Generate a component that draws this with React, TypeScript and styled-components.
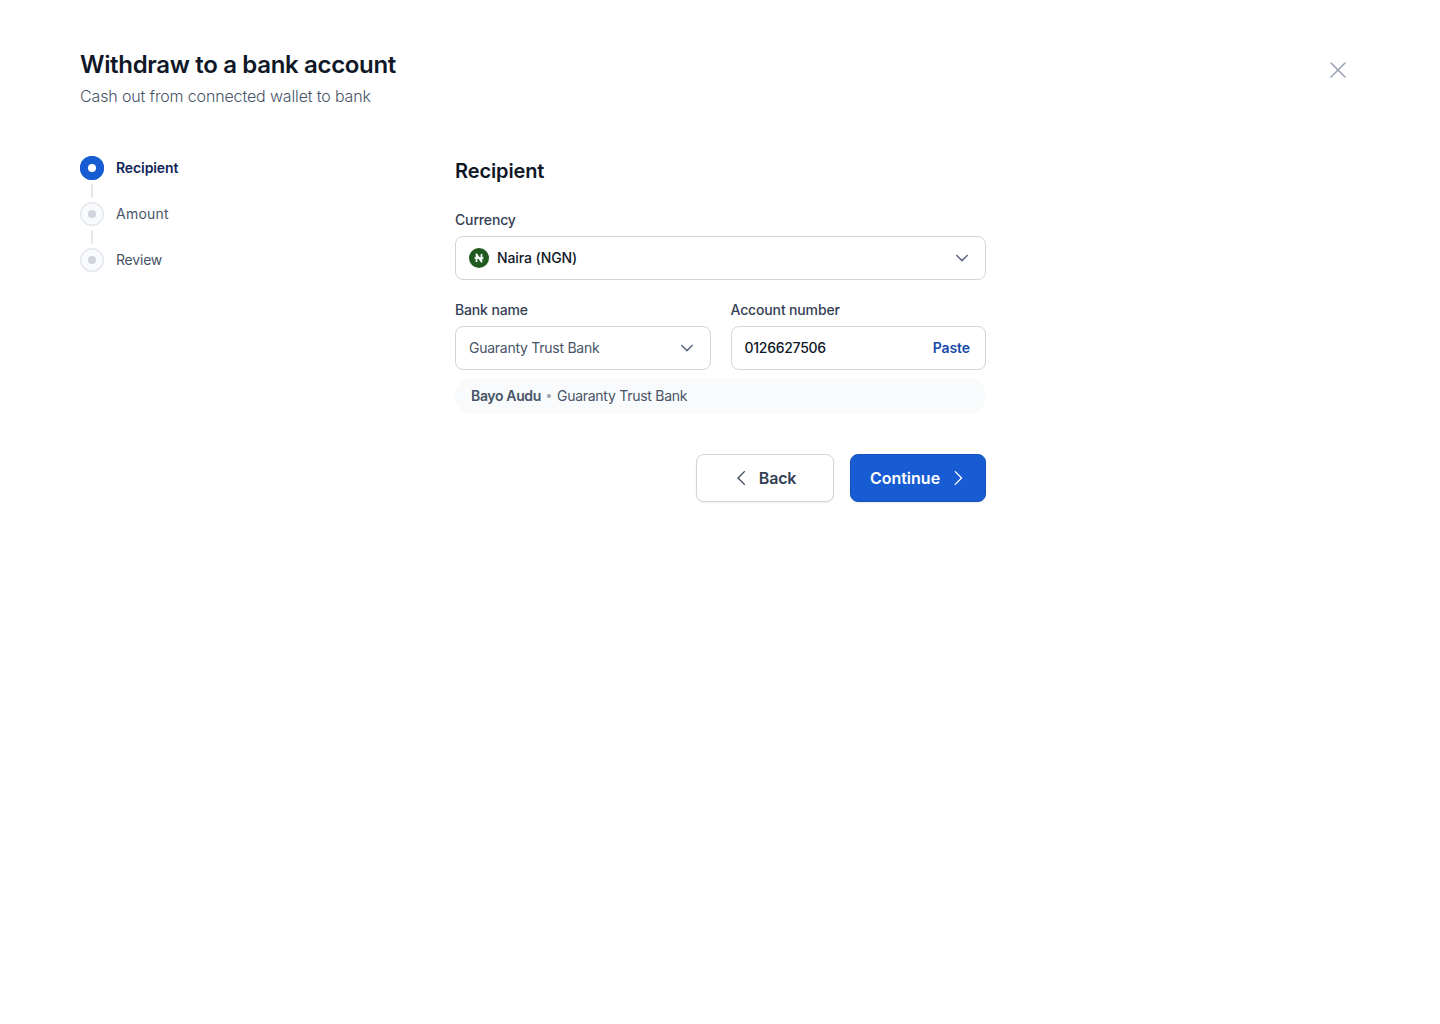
import React from "react";
import styled, { createGlobalStyle } from "styled-components";

const colors = {
  ink: "#101828",
  navy: "#0f2557",
  body: "#344054",
  muted: "#475467",
  line: "#d0d5dd",
  soft: "#e4e7ec",
  surface: "#f9fafb",
  primary: "#175cd3",
  link: "#1849a9",
};

const GlobalStyle = createGlobalStyle`
  *, *::before, *::after { box-sizing: border-box; }
  body {
    margin: 0;
    background: #fff;
    color: ${colors.ink};
    font-family: Inter, "Liberation Sans", sans-serif;
    -webkit-font-smoothing: antialiased;
  }
  h1, h2, p, ol { margin: 0; padding: 0; }
  button { font-family: inherit; cursor: pointer; }
  svg { display: block; flex: none; }
`;

const Page = styled.main`
  min-height: 1024px;
  padding: 48px 80px;
`;

const Header = styled.header`
  display: flex;
  justify-content: space-between;
  align-items: flex-start;
  height: 60px;
`;

const Title = styled.h1`
  padding-top: 1px;
  font-size: 24px;
  line-height: 32px;
  font-weight: 600;
  letter-spacing: -0.33px;
`;

const Subtitle = styled.p`
  margin-top: 3px;
  font-size: 16px;
  line-height: 24px;
  font-weight: 350;
  letter-spacing: -0.14px;
  color: ${colors.muted};
`;

const CloseButton = styled.button`
  display: grid;
  place-items: center;
  width: 44px;
  height: 44px;
  padding: 0;
  border: 0;
  background: none;
  color: #98a2b3;
`;

const Body = styled.div`
  display: grid;
  grid-template-columns: 375px 531px;
  margin-top: 48px;
  align-items: start;
`;

const Steps = styled.ol`
  display: flex;
  flex-direction: column;
  list-style: none;
`;

const Step = styled.li<{ $active?: boolean; $spacing: number }>`
  display: flex;
  align-items: center;
  gap: 12px;
  height: 24px;
  font-size: 14px;
  line-height: 20px;
  font-weight: ${(p) => (p.$active ? 600 : 400)};
  letter-spacing: ${(p) => p.$spacing}px;
  color: ${(p) => (p.$active ? colors.navy : colors.muted)};
`;

const StepDot = styled.span<{ $active?: boolean }>`
  display: grid;
  place-items: center;
  width: 24px;
  height: 24px;
  border-radius: 50%;
  box-shadow: inset 0 0 0 1.5px ${(p) => (p.$active ? colors.primary : colors.soft)};
  background: ${(p) => (p.$active ? colors.primary : colors.surface)};

  &::after {
    content: "";
    width: 8px;
    height: 8px;
    border-radius: 50%;
    background: ${(p) => (p.$active ? "#fff" : colors.line)};
  }
`;

const Connector = styled.li`
  width: 2px;
  height: 14px;
  margin: 4px 0 4px 11px;
  border-radius: 2px;
  background: ${colors.soft};
`;

const Form = styled.section`
  display: flex;
  flex-direction: column;
`;

const Heading = styled.h2`
  font-size: 20px;
  line-height: 30px;
  font-weight: 600;
  letter-spacing: -0.12px;
`;

const Label = styled.span`
  font-size: 14px;
  line-height: 20px;
  font-weight: 500;
  letter-spacing: -0.15px;
  color: ${colors.body};
`;

const Field = styled.div`
  display: flex;
  flex-direction: column;
  gap: 6px;
`;

const CurrencyField = styled(Field)`
  margin-top: 24px;
`;

const FieldRow = styled.div`
  display: grid;
  grid-template-columns: 1fr 1fr;
  gap: 20px;
  margin-top: 20px;
`;

const Control = styled.div`
  display: flex;
  align-items: center;
  gap: 8px;
  height: 44px;
  padding: 0 13px;
  border: 1px solid ${colors.line};
  border-radius: 8px;
  background: #fff;
`;

const Value = styled.span<{ $muted?: boolean; $spacing: number }>`
  flex: 1;
  font-size: 14px;
  line-height: 20px;
  font-weight: ${(p) => (p.$muted ? 400 : 500)};
  letter-spacing: ${(p) => p.$spacing}px;
  color: ${(p) => (p.$muted ? colors.muted : colors.ink)};
`;

const PasteButton = styled.button`
  padding: 0 2px;
  border: 0;
  background: none;
  font-size: 14px;
  line-height: 20px;
  font-weight: 600;
  letter-spacing: -0.1px;
  color: ${colors.link};
`;

const AccountInfo = styled.div`
  display: flex;
  align-items: center;
  height: 36px;
  margin-top: 8px;
  padding: 0 16px;
  border-radius: 18px;
  background: ${colors.surface};
  font-size: 14px;
  line-height: 20px;
  letter-spacing: -0.27px;
  color: ${colors.muted};
`;

const AccountName = styled.strong`
  font-weight: 600;
  letter-spacing: -0.35px;
`;

const Bullet = styled.span`
  width: 4px;
  height: 4px;
  margin: 0 6px;
  border-radius: 50%;
  background: #98a2b3;
`;

const Actions = styled.div`
  display: flex;
  justify-content: flex-end;
  gap: 16px;
  margin-top: 40px;
`;

const Button = styled.button<{ $primary?: boolean }>`
  display: flex;
  align-items: center;
  justify-content: center;
  gap: 8px;
  width: ${(p) => (p.$primary ? 136 : 138)}px;
  height: 48px;
  padding: ${(p) => (p.$primary ? "0 0 0 2px" : "0 3px 0 0")};
  border: 1px solid ${(p) => (p.$primary ? "#1550ba" : colors.line)};
  border-radius: 8px;
  background: ${(p) => (p.$primary ? colors.primary : "#fff")};
  box-shadow: 0 1px 2px rgba(16, 24, 40, 0.07);
  color: ${(p) => (p.$primary ? "#fff" : colors.body)};
  font-size: 16px;
  line-height: 24px;
  font-weight: 600;
  letter-spacing: ${(p) => (p.$primary ? 0 : -0.2)}px;
`;

const CloseIcon = () => (
  <svg width="16" height="16" viewBox="0 0 16 16" fill="none" stroke="currentColor" strokeWidth="1.5" strokeLinecap="round">
    <path d="M1 1l14 14M15 1L1 15" />
  </svg>
);

const ChevronDown = () => (
  <svg width="20" height="20" viewBox="0 0 20 20" fill="none" stroke="#667085" strokeWidth="1.67" strokeLinecap="round" strokeLinejoin="round">
    <path d="M4.8 7.5L10 12.7l5.2-5.2" />
  </svg>
);

const ChevronLeft = () => (
  <svg width="20" height="20" viewBox="0 0 20 20" fill="none" stroke="currentColor" strokeWidth="1.3" strokeLinecap="round" strokeLinejoin="round">
    <path d="M13.4 3.6L7 10l6.4 6.4" />
  </svg>
);

const ChevronRight = () => (
  <svg width="20" height="20" viewBox="0 0 20 20" fill="none" stroke="currentColor" strokeWidth="1.3" strokeLinecap="round" strokeLinejoin="round">
    <path d="M7.2 3.6l6.4 6.4-6.4 6.4" />
  </svg>
);

const NairaIcon = () => (
  <svg width="20" height="20" viewBox="0 0 20 20" fill="none">
    <circle cx="10" cy="10" r="10" fill="#205a1e" />
    <path d="M7.5 14V6.2L12.5 13.8V6" stroke="#fff" strokeWidth="1.7" strokeLinejoin="round" />
    <path d="M5.5 10h9" stroke="#fff" strokeWidth="1.6" />
  </svg>
);

export default function App() {
  return (
    <Page>
      <GlobalStyle />
      <Header>
        <div>
          <Title>Withdraw to a bank account</Title>
          <Subtitle>Cash out from connected wallet to bank</Subtitle>
        </div>
        <CloseButton aria-label="Close">
          <CloseIcon />
        </CloseButton>
      </Header>
      <Body>
        <Steps>
          <Step $active $spacing={-0.1}>
            <StepDot $active />
            Recipient
          </Step>
          <Connector />
          <Step $spacing={0.25}>
            <StepDot />
            Amount
          </Step>
          <Connector />
          <Step $spacing={-0.2}>
            <StepDot />
            Review
          </Step>
        </Steps>
        <Form>
          <Heading>Recipient</Heading>
          <CurrencyField>
            <Label>Currency</Label>
            <Control>
              <NairaIcon />
              <Value $spacing={-0.1}>Naira (NGN)</Value>
              <ChevronDown />
            </Control>
          </CurrencyField>
          <FieldRow>
            <Field>
              <Label>Bank name</Label>
              <Control>
                <Value $muted $spacing={-0.26}>Guaranty Trust Bank</Value>
                <ChevronDown />
              </Control>
            </Field>
            <Field>
              <Label>Account number</Label>
              <Control>
                <Value $spacing={-0.27}>0126627506</Value>
                <PasteButton>Paste</PasteButton>
              </Control>
            </Field>
          </FieldRow>
          <AccountInfo>
            <AccountName>Bayo Audu</AccountName>
            <Bullet />
            Guaranty Trust Bank
          </AccountInfo>
          <Actions>
            <Button>
              <ChevronLeft />
              Back
            </Button>
            <Button $primary>
              Continue
              <ChevronRight />
            </Button>
          </Actions>
        </Form>
      </Body>
    </Page>
  );
}
